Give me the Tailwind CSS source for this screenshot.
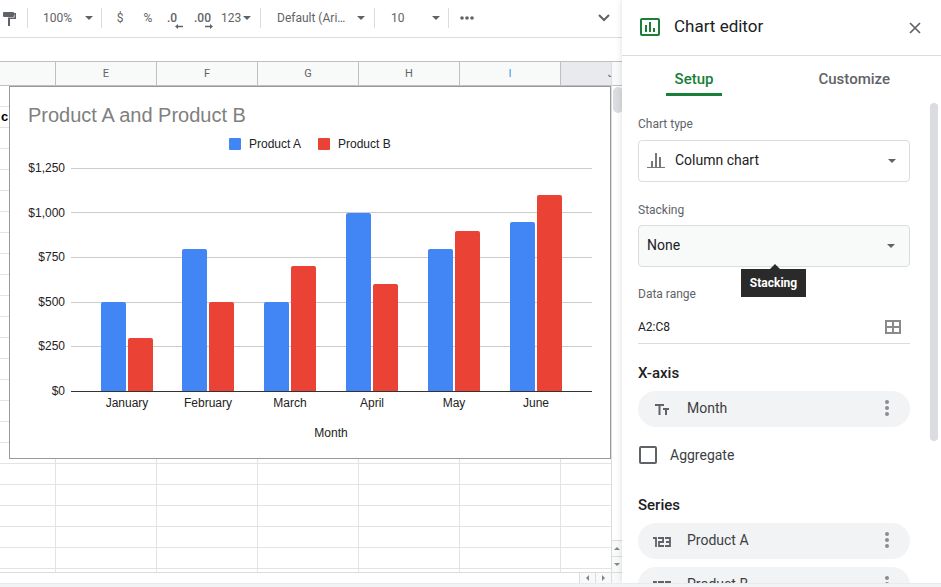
<!DOCTYPE html>
<html lang="en">
<head>
<meta charset="utf-8">
<meta name="viewport" content="width=device-width, initial-scale=1">
<title>Spreadsheet - Chart editor</title>
<script src="https://cdn.jsdelivr.net/npm/@tailwindcss/browser@4"></script>
</head>
<body class="flex h-screen flex-col overflow-hidden bg-white font-['Roboto',sans-serif] text-[#3c4043]">
<div class="flex min-h-0 flex-1 overflow-hidden">

  <main class="flex min-w-0 flex-1 flex-col">
    <!-- Toolbar -->
    <div role="toolbar" aria-label="Formatting" class="flex h-[38px] shrink-0 items-center border-b border-[#dadce0] pb-px text-xs text-[#5f6368]">
      <button aria-label="Paint format" class="flex w-[27px] pl-[3px]">
        <svg class="h-[15px] w-[14px]" viewBox="0 0 14 15" fill="#5f6368"><rect x="0" y="1" width="11" height="5" rx="1"/><path d="M11 2h2v6H7v7H5V6.500h6.500V3.500H11z"/></svg>
      </button>
      <span class="h-5 w-px bg-[#dadce0]"></span>
      <button class="flex w-[73px] items-center justify-between pr-2 pl-[15px]"><span>100%</span>
        <svg class="h-1 w-2" viewBox="0 0 8 4" fill="#5f6368"><path d="M0 0h8L4 4z"/></svg></button>
      <span class="h-5 w-px bg-[#dadce0]"></span>
      <button class="w-9 text-center">$</button>
      <button class="w-5 text-center">%</button>
      <button aria-label="Decrease decimal places" class="relative w-9 pl-[9px] text-left font-medium">.0
        <svg class="absolute top-[14px] left-[17px] h-[5px] w-2" viewBox="0 0 8 5" fill="#5f6368"><path d="M0 2.500 3 0v1.700h5v1.600H3V5z"/></svg></button>
      <button aria-label="Increase decimal places" class="relative w-[27px] text-left font-medium">.00
        <svg class="absolute top-[14px] left-[11px] h-[5px] w-2" viewBox="0 0 8 5" fill="#5f6368"><path d="M8 2.500 5 0v1.700H0v1.600h5V5z"/></svg></button>
      <button class="flex w-[39px] items-center gap-[2px]"><span>123</span>
        <svg class="h-1 w-2" viewBox="0 0 8 4" fill="#5f6368"><path d="M0 0h8L4 4z"/></svg></button>
      <span class="h-5 w-px bg-[#dadce0]"></span>
      <button class="flex w-[113px] items-center justify-between pr-[9px] pl-4"><span>Default (Ari…</span>
        <svg class="h-1 w-2" viewBox="0 0 8 4" fill="#5f6368"><path d="M0 0h8L4 4z"/></svg></button>
      <span class="h-5 w-px bg-[#dadce0]"></span>
      <button class="flex w-[73px] items-center justify-between pr-2 pl-4"><span>10</span>
        <svg class="h-1 w-2" viewBox="0 0 8 4" fill="#5f6368"><path d="M0 0h8L4 4z"/></svg></button>
      <span class="h-5 w-px bg-[#dadce0]"></span>
      <button aria-label="More" class="px-[11px]"><svg class="h-1 w-[14px]" viewBox="0 0 14 4" fill="#5f6368"><circle cx="2" cy="2" r="1.800"/><circle cx="7" cy="2" r="1.800"/><circle cx="12" cy="2" r="1.800"/></svg></button>
      <button aria-label="Hide the menus" class="ml-auto pr-3"><svg class="h-2 w-3" viewBox="0 0 12 8" fill="none" stroke="#5f6368" stroke-width="2"><path d="m1 1 5 5 5-5"/></svg></button>
    </div>
    <div class="h-6 shrink-0 border-b border-[#c0c0c0]"></div>

    <!-- Sheet -->
    <div class="flex min-h-0 flex-1 border-b border-[#dadce0]">
      <div class="relative min-w-0 flex-1 overflow-hidden">
        <table class="w-[662px] table-fixed border-separate border-spacing-0">
          <thead>
            <tr class="h-6 bg-[#f8faf9] text-[#5f6368]">
              <th class="w-14 border-r border-b border-[#c0c0c0] p-0"></th>
              <th class="border-r border-b border-[#c0c0c0] p-0 pt-px text-[11px] font-normal">E</th>
              <th class="border-r border-b border-[#c0c0c0] p-0 pt-px text-[11px] font-normal">F</th>
              <th class="border-r border-b border-[#c0c0c0] p-0 pt-px text-[11px] font-normal">G</th>
              <th class="border-r border-b border-[#c0c0c0] p-0 pt-px text-[11px] font-normal">H</th>
              <th class="border-r border-b border-[#c0c0c0] p-0 pt-px text-[11px] font-normal text-[#4a90d9]">I</th>
              <th class="border-r border-b border-[#c0c0c0] bg-[#e8eaed] p-0 pt-px text-[11px] font-normal">J</th>
            </tr>
          </thead>
          <tbody id="rows"></tbody>
        </table>

        <!-- Embedded chart -->
        <figure class="absolute top-6 left-[9px] h-[373px] w-[602px] border border-[#999] bg-white">
          <svg class="block h-[371px] w-[600px] font-['Liberation_Sans',Arial,sans-serif] text-xs" viewBox="0 0 600 371" role="img" aria-label="Product A and Product B">
            <text x="18" y="35" font-size="20" fill="#808080">Product A and Product B</text>
            <rect x="219" y="51" width="12" height="12" rx="1" fill="#4285f4"/>
            <text x="239" y="61" fill="#222">Product A</text>
            <rect x="308" y="51" width="12" height="12" rx="1" fill="#ea4335"/>
            <text x="328" y="61" fill="#222">Product B</text>
            <g fill="#ccc">
              <rect x="61" y="81" width="521" height="1"/><rect x="61" y="125" width="521" height="1"/><rect x="61" y="170" width="521" height="1"/><rect x="61" y="215" width="521" height="1"/><rect x="61" y="259" width="521" height="1"/>
            </g>
            <g fill="#222" text-anchor="end">
              <text x="55" y="85">$1,250</text><text x="55" y="130">$1,000</text><text x="55" y="174">$750</text><text x="55" y="219">$500</text><text x="55" y="263">$250</text><text x="55" y="308">$0</text>
            </g>
            <g fill="#4285f4">
              <path d="M91 304v-87q0-2 2-2h21q2 0 2 2v87z"/>
              <path d="M172 304V164q0-2 2-2h21q2 0 2 2v140z"/>
              <path d="M254 304v-87q0-2 2-2h21q2 0 2 2v87z"/>
              <path d="M336 304V128q0-2 2-2h21q2 0 2 2v176z"/>
              <path d="M418 304V164q0-2 2-2h21q2 0 2 2v140z"/>
              <path d="M500 304V137q0-2 2-2h21q2 0 2 2v167z"/>
            </g>
            <g fill="#ea4335">
              <path d="M118 304v-51q0-2 2-2h21q2 0 2 2v51z"/>
              <path d="M199 304v-87q0-2 2-2h21q2 0 2 2v87z"/>
              <path d="M281 304V181q0-2 2-2h21q2 0 2 2v123z"/>
              <path d="M363 304V199q0-2 2-2h21q2 0 2 2v105z"/>
              <path d="M445 304V146q0-2 2-2h21q2 0 2 2v158z"/>
              <path d="M527 304V110q0-2 2-2h21q2 0 2 2v194z"/>
            </g>
            <rect x="61" y="304" width="521" height="1" fill="#333"/>
            <g fill="#222" text-anchor="middle">
              <text x="117" y="320">January</text><text x="198" y="320">February</text><text x="280" y="320">March</text><text x="362" y="320">April</text><text x="444" y="320">May</text><text x="526" y="320">June</text>
              <text x="321" y="350">Month</text>
            </g>
          </svg>
        </figure>
      </div>
      <!-- Vertical scrollbar -->
      <div class="flex w-[11px] shrink-0 flex-col overflow-hidden border-l border-[#dadce0]">
        <div class="h-6 shrink-0 border-b border-[#c0c0c0] bg-[#f8faf9]"></div>
        <div class="flex-1 pt-px pl-px"><div class="h-[26px] w-[10px] rounded-full bg-[#dadce0]"></div></div>
        <button aria-label="Scroll up" class="flex h-4 items-center justify-center border-t border-[#dadce0] bg-[#f8faf9]"><svg class="h-[3px] w-[6px]" viewBox="0 0 6 3" fill="#80868b"><path d="M0 3h6L3 0z"/></svg></button>
        <button aria-label="Scroll down" class="flex h-4 items-center justify-center border-t border-[#dadce0] bg-[#f8faf9]"><svg class="h-[3px] w-[6px]" viewBox="0 0 6 3" fill="#80868b"><path d="M0 0h6L3 3z"/></svg></button>
      </div>
    </div>
    <!-- Horizontal scrollbar -->
    <div class="flex h-[10px] shrink-0 justify-end">
      <button aria-label="Scroll left" class="flex w-4 items-center justify-center border-l border-[#dadce0] bg-[#f8faf9]"><svg class="h-[6px] w-[3px]" viewBox="0 0 3 6" fill="#80868b"><path d="M3 0v6L0 3z"/></svg></button>
      <button aria-label="Scroll right" class="flex w-4 items-center justify-center border-l border-[#dadce0] bg-[#f8faf9]"><svg class="h-[6px] w-[3px]" viewBox="0 0 3 6" fill="#80868b"><path d="M0 0v6l3-3z"/></svg></button>
      <span class="w-[11px] border-l border-[#dadce0] bg-[#f8faf9]"></span>
    </div>
  </main>

  <!-- Chart editor -->
  <aside class="z-10 flex w-[319px] shrink-0 flex-col bg-white shadow-[0_0_6px_rgba(60,64,67,0.18)]">
    <header class="flex h-14 shrink-0 items-center border-b border-[#dadce0] pr-5 pb-px pl-[18px]">
      <svg class="h-5 w-5" viewBox="0 0 20 20" fill="#188038"><path fill-rule="evenodd" d="M2 1h16q2 0 2 2v14q0 2-2 2H2q-2 0-2-2V3q0-2 2-2zm0 2v14h16V3z"/><path d="M5 8h2v7H5zM9 5h2v10H9zM13 11h2v4h-2z"/></svg>
      <h1 class="ml-[14px] text-[17px] text-[#202124]">Chart editor</h1>
      <button aria-label="Close" class="mt-px ml-auto"><svg class="h-3 w-3" viewBox="0 0 12 12" fill="none" stroke="#5f6368" stroke-width="1.700"><path d="m1 1 10 10M11 1 1 11"/></svg></button>
    </header>
    <div class="flex min-h-0 flex-1 flex-col">
      <div role="tablist" class="grid h-10 shrink-0 grid-cols-2 items-start text-[15px] font-medium">
        <button role="tab" aria-selected="true" class="mx-11 w-14 border-b-3 border-[#188038] pt-[9px] leading-7 text-[#188038]">Setup</button>
        <button role="tab" aria-selected="false" class="pt-[9px] pr-[14px] leading-7 text-[#5f6368]">Customize</button>
      </div>
      <div class="flex min-h-0 flex-1 pr-[3px]">
        <form class="min-w-0 flex-1 overflow-hidden pr-5 pl-4">
          <label for="type" class="mt-5 block text-xs leading-4 text-[#5f6368]">Chart type</label>
          <div class="relative mt-2">
            <select id="type" class="block h-[42px] w-full appearance-none rounded border border-[#dadce0] bg-white pb-[3px] pl-9 text-sm text-[#202124]"><option>Column chart</option></select>
            <svg class="pointer-events-none absolute top-[13px] left-[9px] h-[15px] w-[18px]" viewBox="0 0 18 15" fill="#777"><path d="M0 14h18v1H0zM4 8h2v6H4zM8 0h2v14H8zM12 4h2v10h-2z"/></svg>
            <svg class="pointer-events-none absolute top-[19px] right-[14px] h-1 w-2" viewBox="0 0 8 4" fill="#5f6368"><path d="M0 0h8L4 4z"/></svg>
          </div>
          <label for="stacking" class="mt-5 block text-xs leading-4 text-[#5f6368]">Stacking</label>
          <div class="relative mt-[7px]">
            <select id="stacking" class="block h-[42px] w-full appearance-none rounded border border-[#dadce0] bg-[#f8faf9] pb-[3px] pl-2 text-sm text-[#202124]"><option>None</option></select>
            <svg class="pointer-events-none absolute top-[19px] right-[15px] h-1 w-2" viewBox="0 0 8 4" fill="#5f6368"><path d="M0 0h8L4 4z"/></svg>
            <div role="tooltip" class="absolute top-[44px] left-[103px] z-10 h-7 w-[65px] bg-[#2a2a2a] text-center text-xs leading-7 font-bold text-white">
              <svg class="absolute -top-[5px] left-[29px] h-[5px] w-[10px]" viewBox="0 0 10 5" fill="#2a2a2a"><path d="M0 5h10L5 0z"/></svg>Stacking</div>
          </div>
          <label for="range" class="mt-[19px] block text-xs leading-4 text-[#5f6368]">Data range</label>
          <div class="mt-2 flex h-[34px] items-center border-b border-[#dadce0] pr-[9px]">
            <input id="range" value="A2:C8" class="min-w-0 flex-1 text-xs text-[#202124] outline-none">
            <button type="button" aria-label="Select data range"><svg class="h-[14px] w-4" viewBox="0 0 16 14" fill="none" stroke="#8a8a8a" stroke-width="2"><path d="M1 1h14v12H1zM8 1v12M1 7h14"/></svg></button>
          </div>
          <h2 class="mt-[19px] text-[15px] leading-5 font-medium text-[#202124]">X-axis</h2>
          <div class="mt-2 flex h-9 items-center rounded-full bg-[#f1f3f4] pr-5 pl-[17px]">
            <svg class="h-[11px] w-[14px]" viewBox="0 0 14 11" fill="#5f6368"><path d="M0 0h9v2H5.500v9h-2V2H0zM8 4h6v2h-2v5h-2V6H8z"/></svg>
            <span class="ml-[18px] pb-[3px] text-sm">Month</span>
            <button type="button" aria-label="Month options" class="ml-auto pb-[2px]"><svg class="h-4 w-[6px]" viewBox="0 0 6 16" fill="#8a8d91"><circle cx="3" cy="2" r="2"/><circle cx="3" cy="8" r="2"/><circle cx="3" cy="14" r="2"/></svg></button>
          </div>
          <label class="mt-[18px] flex items-center text-sm"><input type="checkbox" class="mr-[13px] ml-px h-[18px] w-[18px] appearance-none rounded-[2px] border-2 border-[#5f6368]"><span class="leading-5">Aggregate</span></label>
          <h2 class="mt-[30px] text-[15px] leading-5 font-medium text-[#202124]">Series</h2>
          <div class="mt-2 flex h-9 items-center rounded-full bg-[#f1f3f4] pr-5 pl-[15px]">
            <svg class="mt-px h-[10px] w-[18px]" viewBox="0 0 18 10" fill="none" stroke="#5f6368" stroke-width="1.800"><path d="M0 1h3v9M5 1h5.100v4H6v4h5M12 1h5v8h-5M13 5h4"/></svg>
            <span class="ml-4 pb-[3px] text-sm">Product A</span>
            <button type="button" aria-label="Product A options" class="ml-auto pb-[2px]"><svg class="h-4 w-[6px]" viewBox="0 0 6 16" fill="#8a8d91"><circle cx="3" cy="2" r="2"/><circle cx="3" cy="8" r="2"/><circle cx="3" cy="14" r="2"/></svg></button>
          </div>
          <div class="mt-2 flex h-9 items-center rounded-full bg-[#f1f3f4] pr-5 pl-[15px]">
            <svg class="mt-px h-[10px] w-[18px]" viewBox="0 0 18 10" fill="none" stroke="#5f6368" stroke-width="1.800"><path d="M0 1h3v9M5 1h5.100v4H6v4h5M12 1h5v8h-5M13 5h4"/></svg>
            <span class="ml-4 pb-[3px] text-sm">Product B</span>
            <button type="button" aria-label="Product B options" class="ml-auto pb-[2px]"><svg class="h-4 w-[6px]" viewBox="0 0 6 16" fill="#8a8d91"><circle cx="3" cy="2" r="2"/><circle cx="3" cy="8" r="2"/><circle cx="3" cy="14" r="2"/></svg></button>
          </div>
        </form>
        <div class="w-2 shrink-0 pt-[7px]"><div class="h-[338px] rounded-full bg-[#dadce0]"></div></div>
      </div>
    </div>
  </aside>
</div>
<footer class="h-1 shrink-0 border-t border-[#e8eaed] bg-[#f1f3f4]"></footer>

<script>
  const body = document.getElementById('rows');
  for (let r = 0; r < 24; r++) {
    const tr = body.insertRow();
    for (let c = 0; c < 7; c++) {
      const td = tr.insertCell();
      td.className = "h-[21px] border-r border-b border-[#e2e3e3] p-0 pl-px font-['Liberation_Sans',Arial,sans-serif] text-[13px] leading-5 font-bold text-black";
      if (r === 1 && c === 0) td.textContent = 'c';
    }
  }
</script>
</body>
</html>
